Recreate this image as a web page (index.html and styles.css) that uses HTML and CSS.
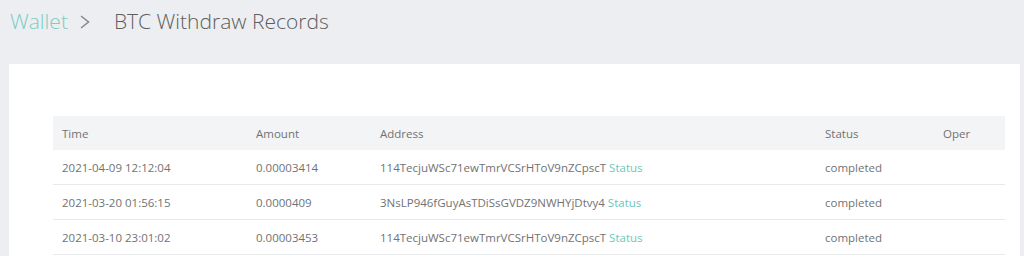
FILE: index.html
```html
<!DOCTYPE html>
<html>
<head>
<meta charset="utf-8">
<link rel="stylesheet" href="styles.css">
</head>
<body>
<div class="crumbs">
  <span class="crumb-link">Wallet</span>
  <svg class="crumb-sep" width="12" height="14" viewBox="0 0 12 14"><path d="M2 1 L9.5 7 L2 13" fill="none" stroke="#8a8a8a" stroke-width="1.6"/></svg>
  <span class="crumb-current">BTC Withdraw Records</span>
</div>
<div class="card">
  <table class="records">
    <colgroup>
      <col class="c-time"><col class="c-amount"><col class="c-address"><col class="c-status"><col class="c-oper">
    </colgroup>
    <thead>
      <tr><th>Time</th><th>Amount</th><th>Address</th><th>Status</th><th>Oper</th></tr>
    </thead>
    <tbody>
      <tr><td>2021-04-09 12:12:04</td><td>0.00003414</td><td>114TecjuWSc71ewTmrVCSrHToV9nZCpscT <span class="link">Status</span></td><td>completed</td><td></td></tr>
      <tr><td>2021-03-20 01:56:15</td><td>0.0000409</td><td>3NsLP946fGuyAsTDiSsGVDZ9NWHYjDtvy4 <span class="link">Status</span></td><td>completed</td><td></td></tr>
      <tr><td>2021-03-10 23:01:02</td><td>0.00003453</td><td>114TecjuWSc71ewTmrVCSrHToV9nZCpscT <span class="link">Status</span></td><td>completed</td><td></td></tr>
    </tbody>
  </table>
</div>
</body>
</html>
```
FILE: styles.css
```css
html, body {
  margin: 0;
  padding: 0;
  background: #eceef1;
  font-family: "Open Sans", "Noto Sans", sans-serif;
  color: #666;
}
.crumbs {
  height: 64px;
  box-sizing: border-box;
  padding: 5px 0 0 10px;
  font-size: 21px;
  line-height: 32px;
  display: flex;
  align-items: flex-start;
  font-weight: 300;
}
.crumb-link { color: #7ccdc2; }
.crumb-sep { margin: 10px 23px 0 11px; flex: none; }
.crumb-current { color: #5e5e5e; }
.card {
  background: #fff;
  margin: 0 4px 0 9px;
  padding: 52px 15px 0 44px;
  height: 192px;
  box-sizing: border-box;
}
.records {
  width: 100%;
  border-collapse: collapse;
  font-size: 11.5px;
  table-layout: fixed;
  color: #727272;
}
.c-time { width: 194px; }
.c-amount { width: 124px; }
.c-address { width: 445px; }
.c-status { width: 118px; }
.records th {
  background: #f3f4f6;
  font-weight: normal;
  text-align: left;
  height: 34px;
  padding: 0 0 0 9px;
  color: #727272;
}
.records td {
  height: 34px;
  padding: 0 0 0 9px;
  border-bottom: 1px solid #e8e9eb;
  white-space: nowrap;
}
.link { color: #6cc7bb; }
```
